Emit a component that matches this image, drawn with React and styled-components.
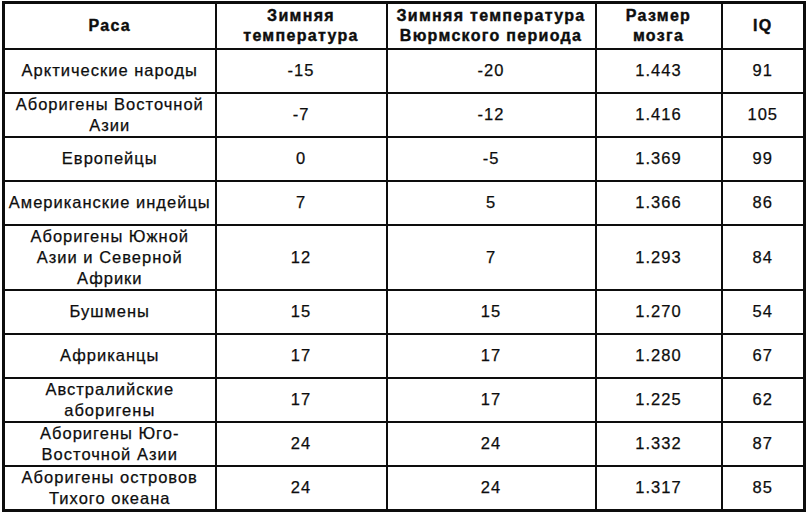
import React from 'react';
import styled, { createGlobalStyle } from 'styled-components';

const GlobalStyle = createGlobalStyle`
  html, body {
    margin: 0;
    padding: 0;
    background: #fff;
  }
  body {
    font-family: "Liberation Sans", Arial, sans-serif;
    color: #0d0d0d;
  }
`;

const Page = styled.div`
  width: 806px;
  height: 515px;
  padding: 1px 2px 0 2px;
  box-sizing: border-box;
  overflow: hidden;
`;

const Table = styled.table`
  width: 801px;
  table-layout: fixed;
  border-collapse: collapse;
  border: 3px solid #0d0d0d;
`;

const HeadRow = styled.tr`
  height: 46px;
`;

const Row = styled.tr`
  height: ${props => (props.tall ? '65px' : '44px')};
`;

const HeadCell = styled.th`
  border: 2px solid #0d0d0d;
  padding: 0 2px;
  font-size: 16px;
  font-weight: 700;
  line-height: 20px;
  letter-spacing: 1.3px;
  text-align: center;
  vertical-align: middle;
  -webkit-text-stroke: 0.4px #0d0d0d;
  white-space: nowrap;
`;

const Cell = styled.td`
  border: 2px solid #0d0d0d;
  padding: 0 2px;
  font-size: 16.5px;
  line-height: 21px;
  letter-spacing: 1px;
  text-align: center;
  vertical-align: middle;
  -webkit-text-stroke: 0.25px #0d0d0d;
  white-space: nowrap;
`;

const columns = [212, 171, 209, 126, 83];

const rows = [
  { race: ['Арктические народы'], winter: '-15', wurm: '-20', brain: '1.443', iq: '91' },
  { race: ['Аборигены Восточной', 'Азии'], winter: '-7', wurm: '-12', brain: '1.416', iq: '105' },
  { race: ['Европейцы'], winter: '0', wurm: '-5', brain: '1.369', iq: '99' },
  { race: ['Американские индейцы'], winter: '7', wurm: '5', brain: '1.366', iq: '86' },
  { race: ['Аборигены Южной', 'Азии и Северной', 'Африки'], winter: '12', wurm: '7', brain: '1.293', iq: '84' },
  { race: ['Бушмены'], winter: '15', wurm: '15', brain: '1.270', iq: '54' },
  { race: ['Африканцы'], winter: '17', wurm: '17', brain: '1.280', iq: '67' },
  { race: ['Австралийские', 'аборигены'], winter: '17', wurm: '17', brain: '1.225', iq: '62' },
  { race: ['Аборигены Юго-', 'Восточной Азии'], winter: '24', wurm: '24', brain: '1.332', iq: '87' },
  { race: ['Аборигены островов', 'Тихого океана'], winter: '24', wurm: '24', brain: '1.317', iq: '85' },
];

const Lines = ({ lines }) =>
  lines.map((line, i) => (
    <React.Fragment key={i}>
      {i > 0 && <br />}
      {line}
    </React.Fragment>
  ));

const App = () => (
  <Page>
    <GlobalStyle />
    <Table>
      <colgroup>
        {columns.map((w, i) => (
          <col key={i} style={{ width: w }} />
        ))}
      </colgroup>
      <thead>
        <HeadRow>
          <HeadCell>Раса</HeadCell>
          <HeadCell>
            <Lines lines={['Зимняя', 'температура']} />
          </HeadCell>
          <HeadCell>
            <Lines lines={['Зимняя температура', 'Вюрмского периода']} />
          </HeadCell>
          <HeadCell>
            <Lines lines={['Размер', 'мозга']} />
          </HeadCell>
          <HeadCell>IQ</HeadCell>
        </HeadRow>
      </thead>
      <tbody>
        {rows.map((row, i) => (
          <Row key={i} tall={row.race.length > 2}>
            <Cell>
              <Lines lines={row.race} />
            </Cell>
            <Cell>{row.winter}</Cell>
            <Cell>{row.wurm}</Cell>
            <Cell>{row.brain}</Cell>
            <Cell>{row.iq}</Cell>
          </Row>
        ))}
      </tbody>
    </Table>
  </Page>
);

export default App;
